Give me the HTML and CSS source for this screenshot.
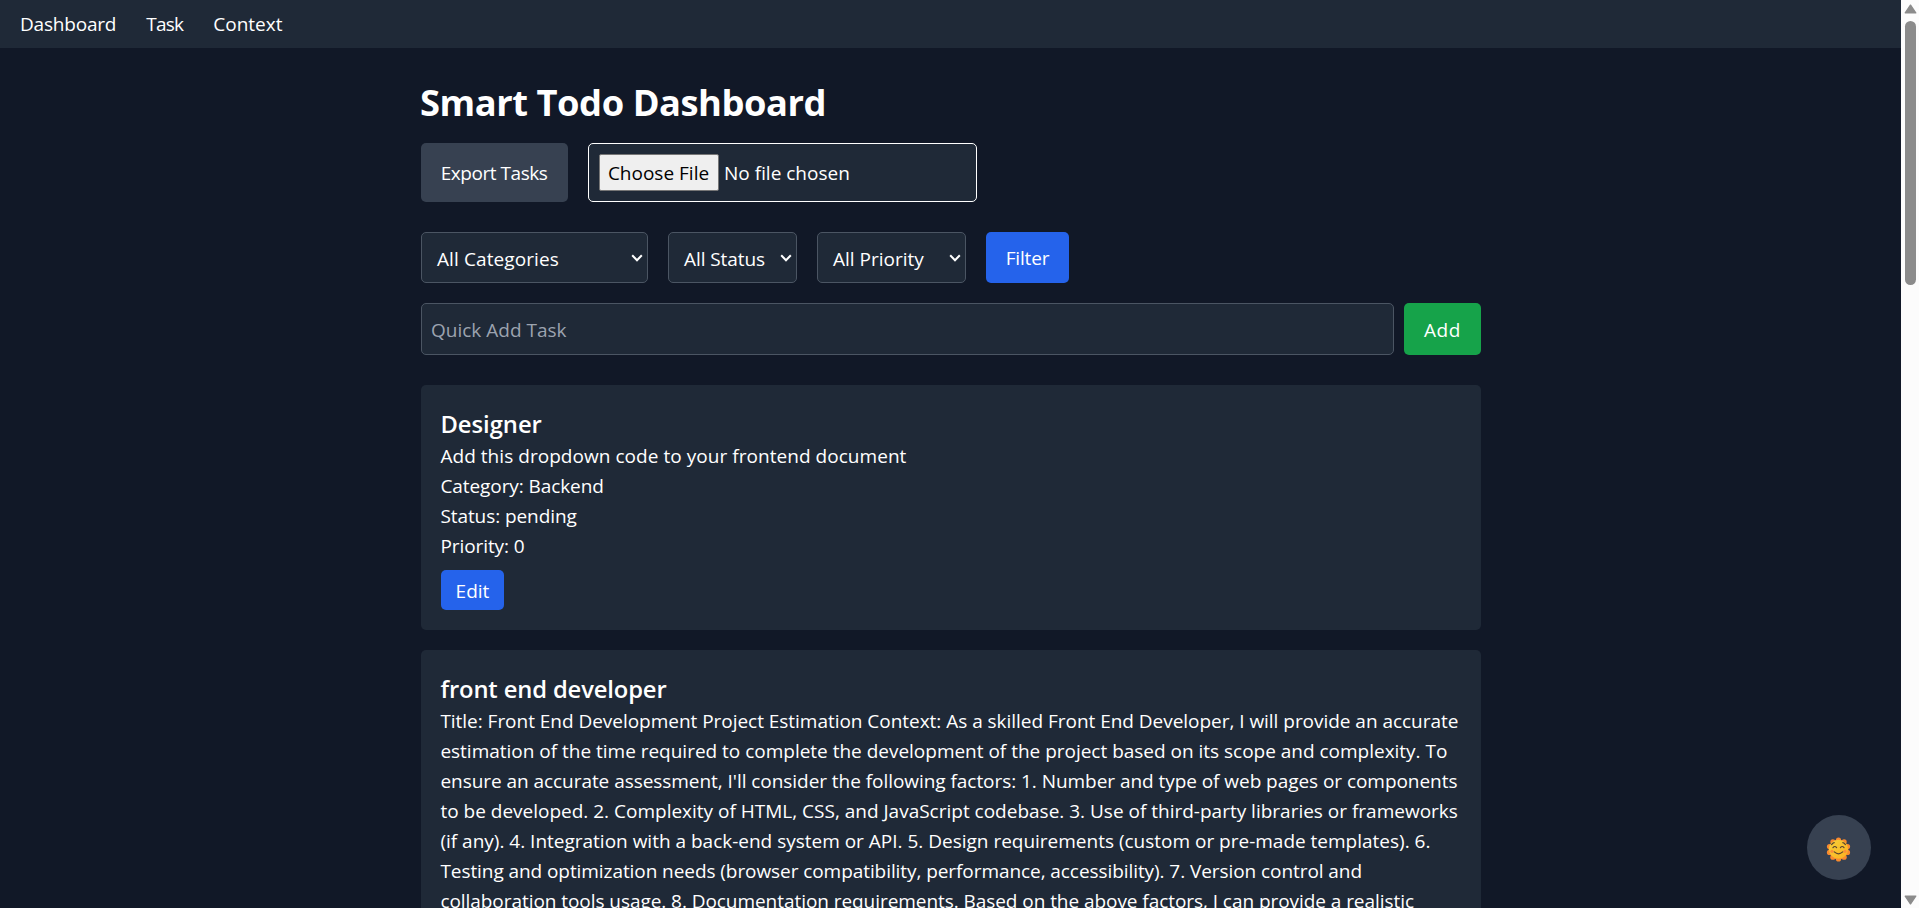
FILE: index.html
```html
<!DOCTYPE html>
<html lang="en">
<head>
<meta charset="utf-8">
<title>Smart Todo Dashboard</title>
<link rel="stylesheet" href="styles.css">
</head>
<body>
<div class="page">
  <nav class="nav">
    <a class="nav-dashboard">Dashboard</a>
    <a class="nav-task">Task</a>
    <a>Context</a>
  </nav>
  <main class="main">
    <h1 class="heading">Smart Todo Dashboard</h1>
    <div class="transfer">
      <button class="btn export">Export Tasks</button>
      <label class="file"><span class="file-btn">Choose File</span><span>No file chosen</span></label>
    </div>
    <div class="filters">
      <div class="select categories">All Categories<svg class="chevron" viewBox="0 0 12 8"><path d="M1.2 1.2 6 6.2l4.8-5"/></svg></div>
      <div class="select status">All Status<svg class="chevron" viewBox="0 0 12 8"><path d="M1.2 1.2 6 6.2l4.8-5"/></svg></div>
      <div class="select priority">All Priority<svg class="chevron" viewBox="0 0 12 8"><path d="M1.2 1.2 6 6.2l4.8-5"/></svg></div>
      <button class="btn filter">Filter</button>
    </div>
    <div class="quick">
      <div class="quick-input">Quick Add Task</div>
      <button class="btn add">Add</button>
    </div>
    <section class="card">
      <h2 class="title">Designer</h2>
      <p class="t-desc">Add this dropdown code to your frontend document</p>
      <p class="t-tight">Category: Backend</p>
      <p class="t-tight">Status: pending</p>
      <p class="t-tight">Priority: 0</p>
      <button class="btn edit">Edit</button>
    </section>
    <section class="card">
      <h2 class="title title-long">front end developer</h2>
      <p class="l1">Title: Front End Development Project Estimation Context: As a skilled Front End Developer, I will provide an accurate</p>
      <p class="l2">estimation of the time required to complete the development of the project based on its scope and complexity. To</p>
      <p class="l3">ensure an accurate assessment, I'll consider the following factors: 1. Number and type of web pages or components</p>
      <p class="l4">to be developed. 2. Complexity of HTML, CSS, and JavaScript codebase. 3. Use of third-party libraries or frameworks</p>
      <p class="l5">(if any). 4. Integration with a back-end system or API. 5. Design requirements (custom or pre-made templates). 6.</p>
      <p class="l6">Testing and optimization needs (browser compatibility, performance, accessibility). 7. Version control and</p>
      <p class="l7">collaboration tools usage. 8. Documentation requirements. Based on the above factors, I can provide a realistic</p>
    </section>
  </main>
  <button class="theme" aria-label="Toggle theme">
    <svg width="25" height="25" viewBox="0 0 25 25">
      <defs>
        <linearGradient id="face" x1="0" y1="0" x2="1" y2="1"><stop offset="0" stop-color="#f6d13a"/><stop offset="1" stop-color="#fbb01f"/></linearGradient>
      </defs>
      <g fill="#f98a2e">
        <circle cx="12.5" cy="12.5" r="9.8"/>
        <circle cx="12.5" cy="3" r="2.6"/><circle cx="18.1" cy="4.8" r="2.6"/><circle cx="21.5" cy="9.6" r="2.6"/>
        <circle cx="21.5" cy="15.4" r="2.6"/><circle cx="18.1" cy="20.2" r="2.6"/><circle cx="12.5" cy="22" r="2.6"/>
        <circle cx="6.9" cy="20.2" r="2.6"/><circle cx="3.5" cy="15.4" r="2.6"/><circle cx="3.5" cy="9.6" r="2.6"/><circle cx="6.9" cy="4.8" r="2.6"/>
      </g>
      <circle cx="12.5" cy="12.3" r="9.5" fill="url(#face)"/>
      <g fill="#fb8f3a"><circle cx="6" cy="14.3" r="1.6"/><circle cx="19" cy="14.3" r="1.6"/></g>
      <g fill="none" stroke="#5b4530" stroke-width="1.2" stroke-linecap="round">
        <path d="M5.6 7.6Q6.600 6 8.200 5.700M19.400 7.600Q18.400 6 16.800 5.700"/>
        <path d="M7 10.700Q8.800 8.400 10.600 10.600M14.400 10.600Q16.200 8.400 18 10.700"/>
        <path d="M8.300 14.900Q12.500 18.800 16.700 14.900"/>
      </g>
    </svg>
  </button>
</div>
<div class="scrollbar">
  <svg width="13" height="10" viewBox="0 0 13 10"><path d="M6.500 1.200 11.700 8.800H1.300z"/></svg>
  <div class="thumb"></div>
  <svg class="down" width="13" height="10" viewBox="0 0 13 10"><path d="M6.500 8.800 11.700 1.200H1.300z"/></svg>
</div>
</body>
</html>
```

FILE: styles.css
```css
* {
  box-sizing: border-box;
}

body {
  margin: 0;
  height: 908px;
  display: flex;
  overflow: hidden;
  background: #111827;
  color: #fff;
  font: 19px/30px "Open Sans", sans-serif;
}

h1, h2, p {
  margin: 0;
  white-space: nowrap;
}

.page {
  position: relative;
  flex: 1;
  height: 908px;
  overflow: hidden;
}

.nav {
  display: flex;
  gap: 30px;
  height: 48px;
  padding: 9px 20px 0;
  background: #1f2937;
}

.nav-dashboard { letter-spacing: -0.2px; }
.nav-task { letter-spacing: -0.76px; }

.main {
  width: 1060px;
  margin-left: 421px;
  padding-top: 29px;
}

.heading {
  margin: 0 0 16px -1px;
  font-size: 36.3px;
  line-height: 50px;
  font-weight: 700;
  letter-spacing: -0.45px;
}

.btn {
  border: 0;
  border-radius: 5px;
  padding: 0;
  color: #fff;
  font: inherit;
  text-align: center;
}

.transfer {
  display: flex;
  gap: 20px;
  height: 59px;
  margin-bottom: 30px;
}

.export {
  width: 147px;
  background: #374151;
  letter-spacing: -0.45px;
  padding: 1px 1px 0 0;
}

.file {
  display: flex;
  align-items: flex-start;
  gap: 5px;
  width: 389px;
  padding: 10px;
  border: 1px solid #fff;
  border-radius: 5px;
  background: #1f2937;
}

.file > span {
  padding-top: 4px;
}

.file .file-btn {
  width: 120px;
  height: 37px;
  padding: 3px 1px 0 0;
  border: 1px solid #767676;
  border-radius: 2px;
  background: #efefef;
  color: #000;
  text-align: center;
}

.filters {
  display: flex;
  gap: 20px;
  height: 51px;
  margin-bottom: 20px;
}

.select {
  position: relative;
  padding: 11px 0 0 15px;
  border: 1px solid #4b5563;
  border-radius: 5px;
  background: #1f2937;
  white-space: nowrap;
}

.categories { width: 227px; letter-spacing: 0.1px; }
.status { width: 129px; letter-spacing: -0.07px; }
.priority { width: 149px; }

.chevron {
  position: absolute;
  right: 4px;
  top: 21px;
  width: 12px;
  height: 8px;
  fill: none;
  stroke: #fff;
  stroke-width: 2;
}

.filter {
  width: 83px;
  background: #2563eb;
  letter-spacing: -0.18px;
}

.quick {
  display: flex;
  gap: 10px;
  height: 52px;
  margin-bottom: 30px;
}

.quick-input {
  flex: 1;
  padding: 11px 9px 0;
  border: 1px solid #4b5563;
  border-radius: 5px;
  background: #1f2937;
  color: #9ca3af;
}

.add {
  width: 77px;
  padding-top: 2px;
  background: #16a34a;
  letter-spacing: 0.5px;
}

.card {
  padding: 22px 20px 20px;
  margin-bottom: 20px;
  border-radius: 5px;
  background: #1f2937;
}

.card h2,
.card p {
  margin-left: -0.6px;
}

.title {
  font-size: 23.75px;
  line-height: 34px;
  font-weight: 600;
}

.title-long { letter-spacing: -0.12px; }

.edit {
  display: block;
  width: 63px;
  height: 40px;
  margin-top: 9px;
  padding-top: 2px;
  background: #2563eb;
}

.t-desc { letter-spacing: 0.046px; }
.t-tight { letter-spacing: -0.08px; }
.l1 { letter-spacing: -0.031px; }
.l2 { letter-spacing: -0.012px; }
.l3 { letter-spacing: -0.049px; }
.l4 { letter-spacing: -0.003px; }
.l5 { letter-spacing: -0.007px; }
.l6 { letter-spacing: -0.071px; }
.l7 { letter-spacing: -0.057px; }

.theme {
  position: absolute;
  right: 30px;
  bottom: 28px;
  width: 64px;
  height: 65px;
  display: grid;
  place-items: center;
  padding: 3px 1px 0 0;
  border: 0;
  border-radius: 50%;
  background: #374151;
}

.scrollbar {
  display: flex;
  flex-direction: column;
  align-items: center;
  width: 18px;
  height: 908px;
  padding: 4px 0 3px 1px;
  background: #fcfcfc;
}

.scrollbar svg {
  fill: #8b8b8b;
  stroke: #8b8b8b;
  stroke-width: 1.5;
  stroke-linejoin: round;
}

.thumb {
  width: 11px;
  height: 264px;
  margin: 7px 0 auto;
  border-radius: 6px;
  background: #8b8b8b;
}
```
